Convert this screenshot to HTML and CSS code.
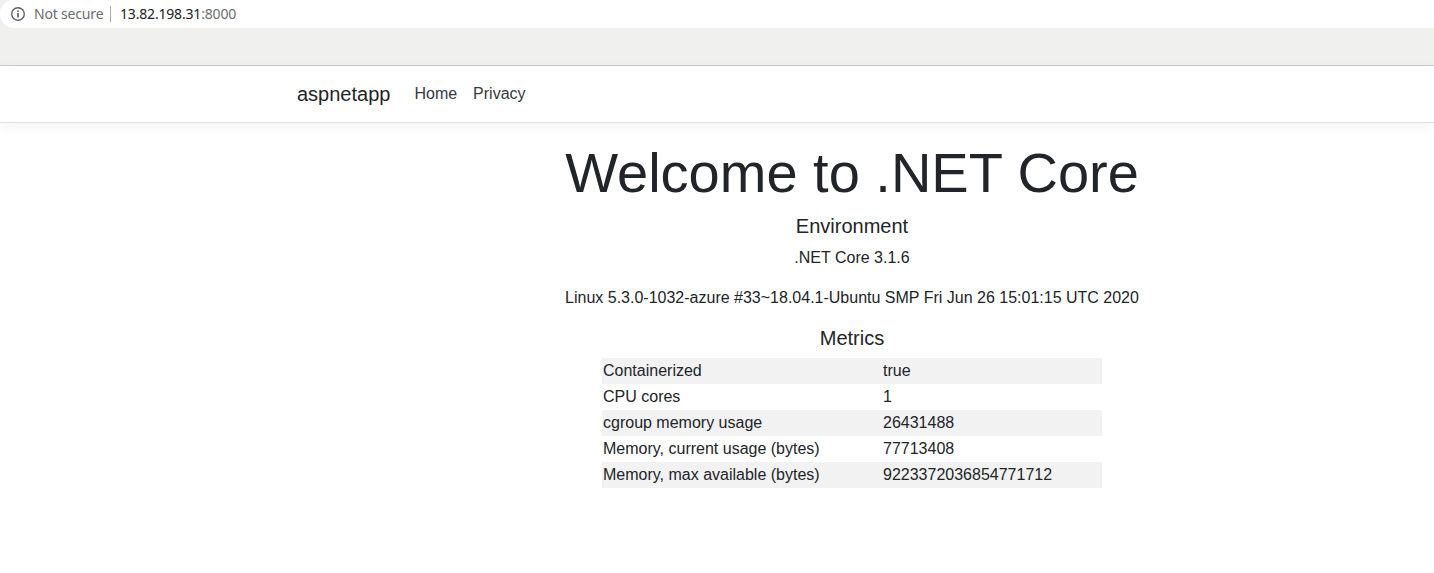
FILE: index.html
```html
<!DOCTYPE html>
<html lang="en">
<head>
<meta charset="utf-8">
<title>Home page - aspnetapp</title>
<link rel="stylesheet" href="styles.css">
</head>
<body>
<div class="chrome">
  <div class="address">
    <svg class="info" viewBox="0 0 16 16" width="16" height="16"><circle cx="8" cy="8" r="6.3" fill="none" stroke="#5f6368" stroke-width="1.4"/><path d="M8 7v4.4M8 4.4v1.6" stroke="#5f6368" stroke-width="1.7"/></svg>
    <span class="security">Not secure</span>
    <span class="url">13.82.198.31<span class="port">:8000</span></span>
  </div>
</div>
<header class="navbar">
  <nav class="container">
    <a class="brand">aspnetapp</a>
    <a class="link">Home</a>
    <a class="link">Privacy</a>
  </nav>
</header>
<main class="content">
  <h1>Welcome to .NET Core</h1>
  <h5>Environment</h5>
  <p>.NET Core 3.1.6</p>
  <p>Linux 5.3.0-1032-azure #33~18.04.1-Ubuntu SMP Fri Jun 26 15:01:15 UTC 2020</p>
  <h5>Metrics</h5>
  <table class="metrics">
    <tr><td>Containerized</td><td>true</td></tr>
    <tr><td>CPU cores</td><td>1</td></tr>
    <tr><td>cgroup memory usage</td><td>26431488</td></tr>
    <tr><td>Memory, current usage (bytes)</td><td>77713408</td></tr>
    <tr><td>Memory, max available (bytes)</td><td>9223372036854771712</td></tr>
  </table>
</main>
</body>
</html>
```
FILE: styles.css
```css
* { box-sizing: border-box; }
body { margin: 0; background: #fff; color: #212529; font: 16px/24px "Liberation Sans", Arial, sans-serif; overflow: hidden; height: 573px; }
.chrome { height: 66px; background: #f0f0ee; border-bottom: 1px solid #cacaca; }
.address { height: 28px; display: flex; align-items: center; padding-left: 10px; background: #fff; border-radius: 14px 0 0 14px; font: 14px/28px "Noto Sans", "Open Sans", sans-serif; letter-spacing: -0.18px; white-space: nowrap; }
.info { display: block; margin-right: 8px; }
.security { color: #6a6d70; width: 69px; }
.url { color: #202124; margin-left: 7px; padding-left: 9px; border-left: 1px solid #a6a6a6; line-height: 16px; }
.port { color: #6a6d70; }
.navbar { height: 57px; border-bottom: 1px solid #dee2e6; box-shadow: 0 4px 12px rgba(0,0,0,.05); }
.container { display: flex; align-items: center; height: 56px; padding-left: 297px; }
.brand { font-size: 20px; line-height: 30px; margin-right: 16px; }
.link { color: #343a40; padding: 0 8px; }
.content { width: 1110px; margin: 16px 0 0 297px; text-align: center; }
h1, h5, p { margin: 0; font-weight: 400; }
h1 { font-size: 56px; line-height: 67px; margin-bottom: 8px; }
h5 { font-size: 20px; line-height: 24px; margin-bottom: 8px; }
p { margin-bottom: 16px; }
.metrics { width: 500px; margin: 0 auto; border-collapse: collapse; text-align: left; }
.metrics td { padding: 1px; height: 26px; }
.metrics td:first-child { width: 280px; }
.metrics tr:nth-child(odd) { background: #f2f2f2; }
```
